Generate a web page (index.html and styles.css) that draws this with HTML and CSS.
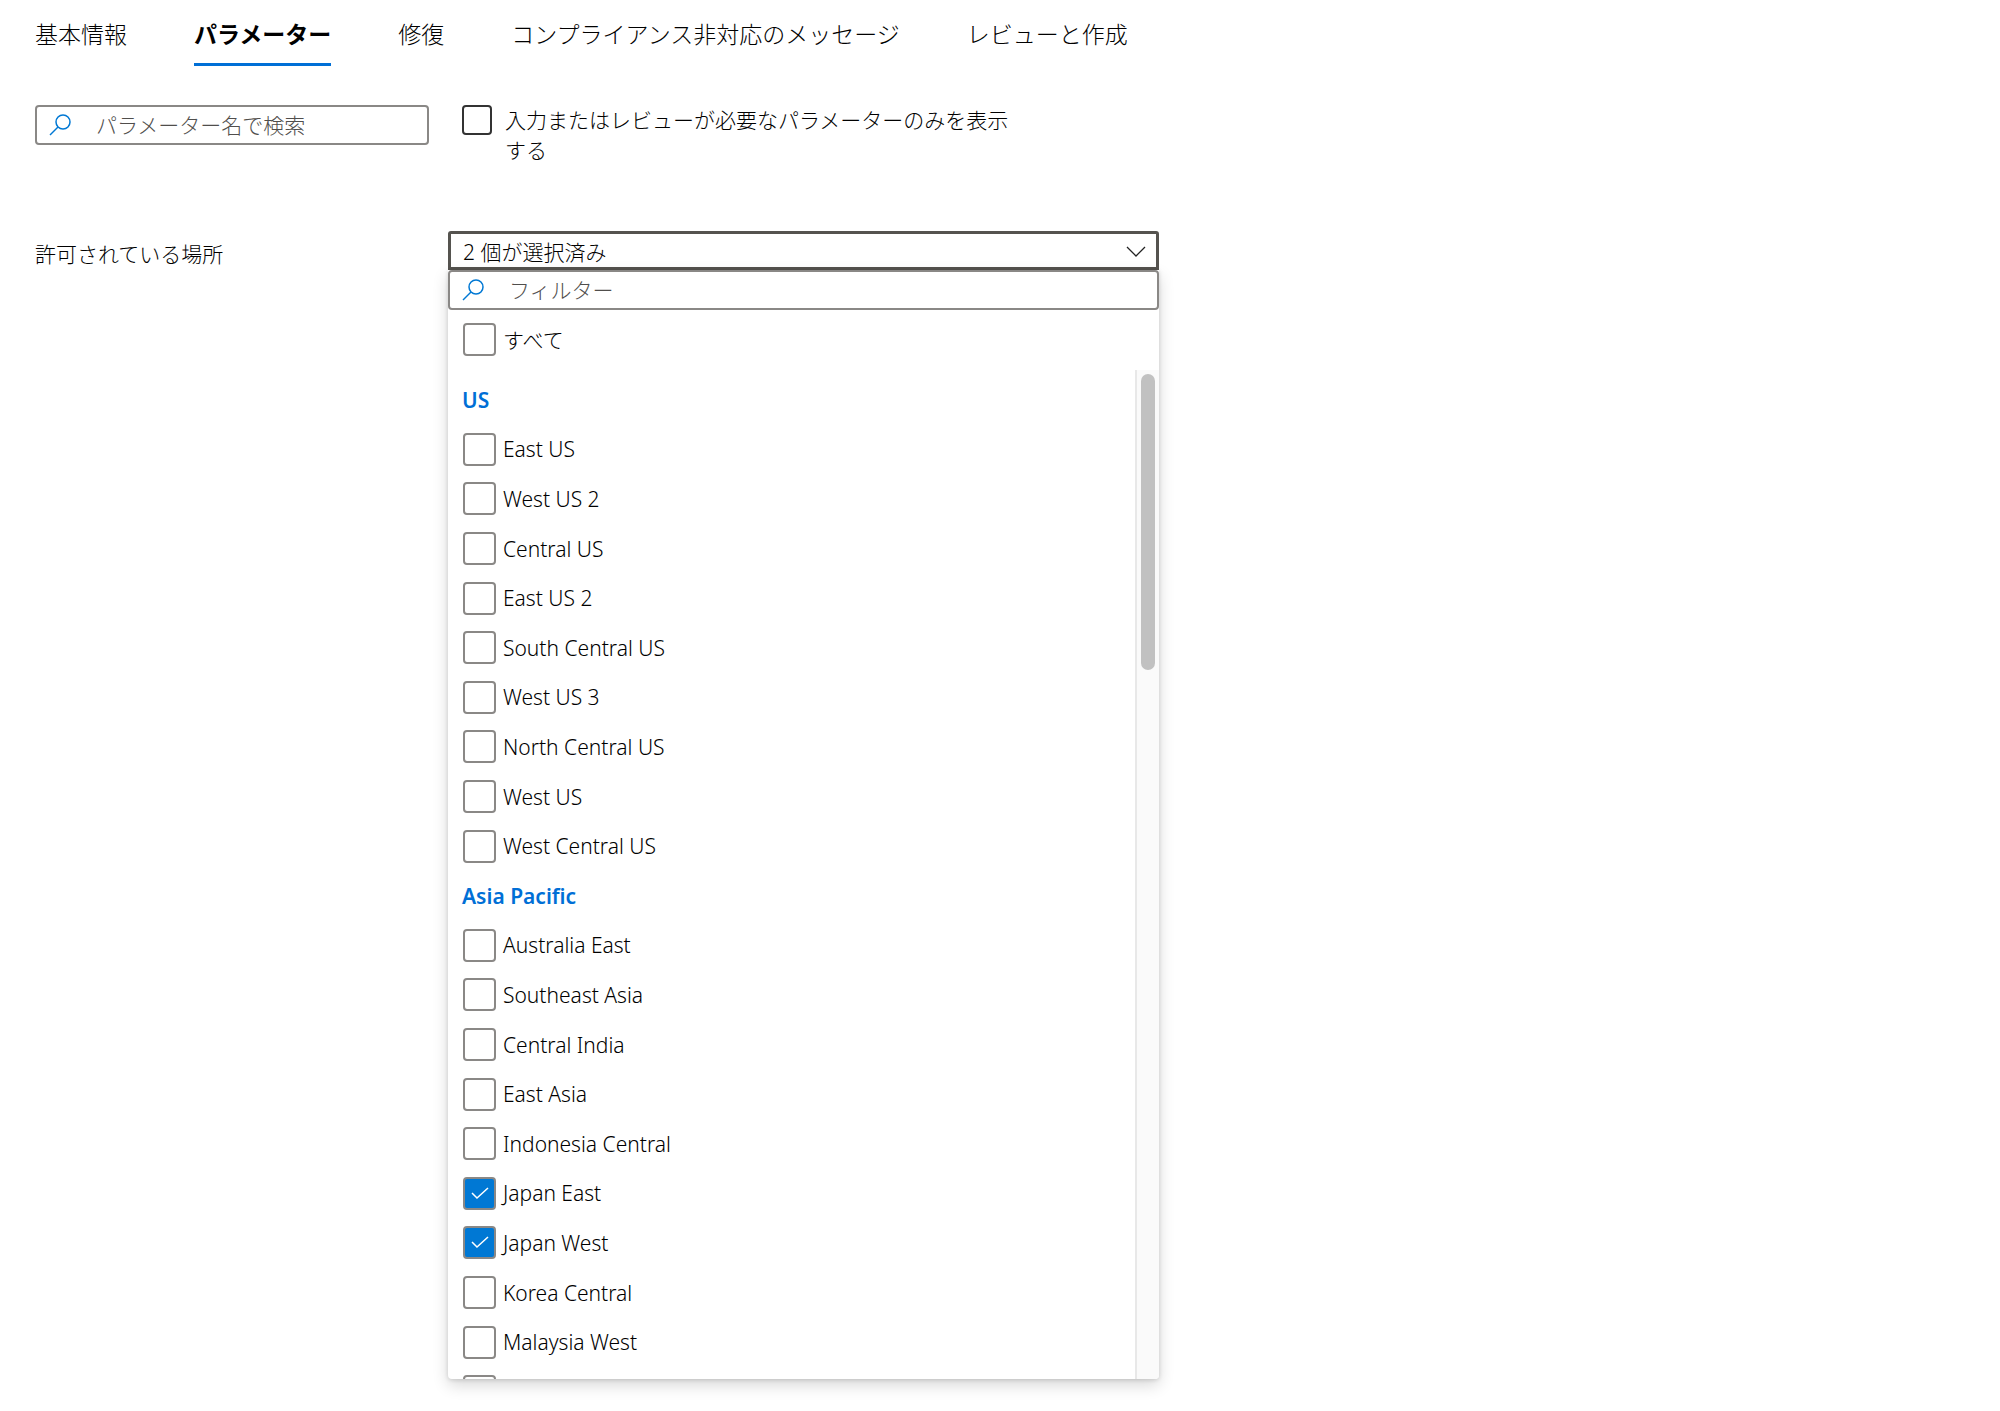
FILE: index.html
```html
<!DOCTYPE html>
<html lang="ja">
<head>
<meta charset="utf-8">
<meta name="viewport" content="width=device-width, initial-scale=1">
<title>パラメーター</title>
<link rel="stylesheet" href="styles.css">
</head>
<body>
<svg class="defs" aria-hidden="true">
  <symbol id="icon-search" viewBox="0 0 22 22"><circle cx="14" cy="8" r="7"/><path d="M9 13 L1 21"/></symbol>
</svg>
<main class="page">
  <div class="tabs" role="tablist">
    <button class="tab" role="tab" type="button">基本情報</button>
    <button class="tab tab-active" role="tab" type="button" aria-selected="true">パラメーター</button>
    <button class="tab" role="tab" type="button">修復</button>
    <button class="tab" role="tab" type="button">コンプライアンス非対応のメッセージ</button>
    <button class="tab" role="tab" type="button">レビューと作成</button>
  </div>

  <div class="toolbar">
    <div class="search">
      <svg class="search-icon" aria-hidden="true"><use href="#icon-search"/></svg>
      <input class="search-input" type="text" placeholder="パラメーター名で検索" aria-label="パラメーター名で検索">
    </div>
    <label class="only-required"><input class="check check-dark" type="checkbox"><span>入力またはレビューが必要なパラメーターのみを表示する</span></label>
  </div>

  <div class="field">
    <label class="field-label" for="locations">許可されている場所</label>
    <div class="picker">
      <div class="select-box">
        <select class="select" id="locations"><option>2 個が選択済み</option></select>
        <svg class="chevron" viewBox="0 0 20 11" aria-hidden="true"><path d="M1 1 L10 10 L19 1"/></svg>
      </div>
      <div class="panel">
        <div class="search search-filter">
          <svg class="search-icon" aria-hidden="true"><use href="#icon-search"/></svg>
          <input class="search-input" type="text" placeholder="フィルター" aria-label="フィルター">
        </div>
        <label class="option option-all"><input class="check" type="checkbox"><span>すべて</span></label>
        <div class="list">
          <div class="groups">
            <section class="group">
              <h2 class="group-title">US</h2>
              <label class="option"><input class="check" type="checkbox"><span>East US</span></label>
              <label class="option"><input class="check" type="checkbox"><span>West US 2</span></label>
              <label class="option"><input class="check" type="checkbox"><span>Central US</span></label>
              <label class="option"><input class="check" type="checkbox"><span>East US 2</span></label>
              <label class="option"><input class="check" type="checkbox"><span>South Central US</span></label>
              <label class="option"><input class="check" type="checkbox"><span>West US 3</span></label>
              <label class="option"><input class="check" type="checkbox"><span>North Central US</span></label>
              <label class="option"><input class="check" type="checkbox"><span>West US</span></label>
              <label class="option"><input class="check" type="checkbox"><span>West Central US</span></label>
            </section>
            <section class="group">
              <h2 class="group-title">Asia Pacific</h2>
              <label class="option"><input class="check" type="checkbox"><span>Australia East</span></label>
              <label class="option"><input class="check" type="checkbox"><span>Southeast Asia</span></label>
              <label class="option"><input class="check" type="checkbox"><span>Central India</span></label>
              <label class="option"><input class="check" type="checkbox"><span>East Asia</span></label>
              <label class="option"><input class="check" type="checkbox"><span>Indonesia Central</span></label>
              <label class="option"><input class="check" type="checkbox" checked><span>Japan East</span></label>
              <label class="option"><input class="check" type="checkbox" checked><span>Japan West</span></label>
              <label class="option"><input class="check" type="checkbox"><span>Korea Central</span></label>
              <label class="option"><input class="check" type="checkbox"><span>Malaysia West</span></label>
            </section>
            <div class="option option-next"><input class="check" type="checkbox" aria-label="New Zealand North"></div>
          </div>
          <div class="scrollbar" aria-hidden="true"><div class="thumb"></div></div>
        </div>
      </div>
    </div>
  </div>
</main>
</body>
</html>
```
FILE: styles.css
```css
* { box-sizing: border-box; }

body {
  margin: 0;
  background: #fff;
  color: #000;
  font-family: "Noto Sans", "Noto Sans CJK JP", sans-serif;
  font-size: 21px;
  font-weight: 300;
  line-height: 30px;
}

button, input, select { font: inherit; color: inherit; }

.defs { display: none; }

.page { padding: 18px 35px 32px; }

.tabs { display: flex; flex-wrap: wrap; gap: 0 67px; }

.tab {
  padding: 0 0 12px;
  border: 0;
  border-bottom: 3px solid transparent;
  background: none;
  font-size: 23px;
  line-height: 33px;
  white-space: nowrap;
}

.tab-active { border-color: #006fd6; font-weight: 700; }

.toolbar {
  display: flex;
  align-items: flex-start;
  gap: 33px;
  margin-top: 39px;
}

.search {
  display: flex;
  align-items: center;
  gap: 25px;
  flex: 0 1 394px;
  height: 40px;
  padding: 0 12px;
  border: 2px solid #8a8886;
  border-radius: 4px;
  background: #fff;
}

.search-icon {
  flex: none;
  width: 22px;
  height: 22px;
  fill: none;
  stroke: #0078d4;
  stroke-width: 1.5;
}

.search-input {
  flex: 1;
  min-width: 0;
  padding: 0;
  border: 0;
  outline: 0;
  background: none;
}

.search-input::placeholder { color: #504e4c; opacity: 1; }

.check {
  appearance: none;
  flex: none;
  width: 33px;
  height: 33px;
  margin: 0;
  border: 2px solid #8a8886;
  border-radius: 4px;
  background: #fff;
}

.check:checked {
  background: #0078d4 url("data:image/svg+xml,%3Csvg xmlns='http://www.w3.org/2000/svg' viewBox='0 0 18 13' fill='none' stroke='white' stroke-width='1.5'%3E%3Cpath d='M1 6 L6 11 L17 1'/%3E%3C/svg%3E") center / 18px 13px no-repeat;
}

.check-dark { width: 30px; height: 30px; border-color: #333; }

.only-required {
  display: flex;
  gap: 13px;
  max-width: 562px;
}

.field {
  display: flex;
  align-items: flex-start;
  margin-top: 66px;
}

.field-label { flex: 0 0 413px; padding-top: 8px; }

.picker { flex: 0 1 711px; min-width: 0; }

.select-box {
  display: grid;
  align-items: center;
  height: 39px;
  border: 3px solid #55534f;
  border-radius: 3px 3px 0 0;
}

.select-box > * { grid-area: 1 / 1; }

.select {
  appearance: none;
  width: 100%;
  padding: 2px 40px 0 12px;
  border: 0;
  outline: 0;
  background: none;
}

.chevron {
  justify-self: end;
  width: 20px;
  height: 11px;
  margin-top: 2px;
  margin-right: 10px;
  fill: none;
  stroke: #222;
  stroke-width: 1.3;
  pointer-events: none;
}

.panel {
  border-radius: 0 0 4px 4px;
  background: #fff;
  box-shadow: 0 6px 16px rgba(0, 0, 0, 0.16), 0 1px 4px rgba(0, 0, 0, 0.14);
}

.option {
  display: flex;
  align-items: center;
  gap: 7px;
  padding-left: 15px;
}

.option-all { padding-top: 13px; padding-bottom: 14px; }

.list {
  display: flex;
  height: 1009px;
  overflow: hidden;
  border-radius: 0 0 4px 4px;
}

.groups { flex: 1; padding-top: 5px; }

.group {
  display: grid;
  grid-template-rows: repeat(10, 1fr);
  align-items: center;
  height: 496px;
}

.group-title {
  margin: 0;
  padding-left: 14px;
  color: #006fd6;
  font-size: 21px;
  font-weight: 600;
}

.option-next { padding-top: 8px; }

.scrollbar {
  flex: none;
  width: 24px;
  padding: 4px 4px 0;
  border-left: 2px solid #e8e8e8;
  background: #fafafa;
}

.thumb {
  width: 14px;
  height: 296px;
  border-radius: 7px;
  background: #c1c1c1;
}
```
